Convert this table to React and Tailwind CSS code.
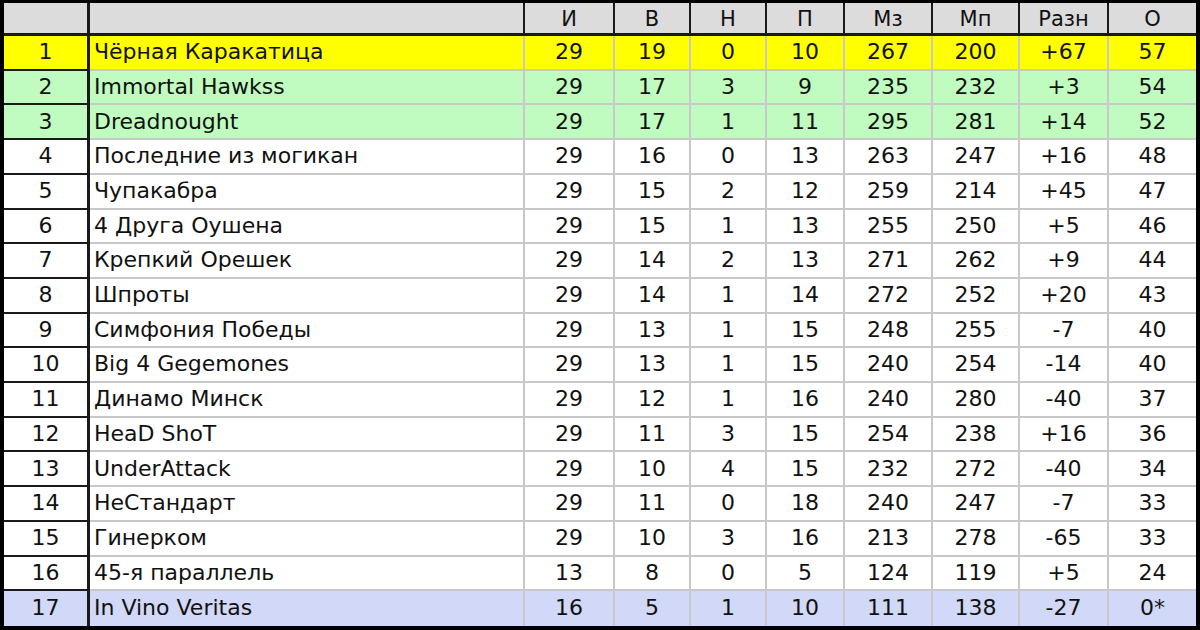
import React from 'react';

const rows = [
  [1, 'Чёрная Каракатица', 29, 19, 0, 10, 267, 200, '+67', '57'],
  [2, 'Immortal Hawkss', 29, 17, 3, 9, 235, 232, '+3', '54'],
  [3, 'Dreadnought', 29, 17, 1, 11, 295, 281, '+14', '52'],
  [4, 'Последние из могикан', 29, 16, 0, 13, 263, 247, '+16', '48'],
  [5, 'Чупакабра', 29, 15, 2, 12, 259, 214, '+45', '47'],
  [6, '4 Друга Оушена', 29, 15, 1, 13, 255, 250, '+5', '46'],
  [7, 'Крепкий Орешек', 29, 14, 2, 13, 271, 262, '+9', '44'],
  [8, 'Шпроты', 29, 14, 1, 14, 272, 252, '+20', '43'],
  [9, 'Симфония Победы', 29, 13, 1, 15, 248, 255, '-7', '40'],
  [10, 'Big 4 Gegemones', 29, 13, 1, 15, 240, 254, '-14', '40'],
  [11, 'Динамо Минск', 29, 12, 1, 16, 240, 280, '-40', '37'],
  [12, 'HeaD ShoT', 29, 11, 3, 15, 254, 238, '+16', '36'],
  [13, 'UnderAttack', 29, 10, 4, 15, 232, 272, '-40', '34'],
  [14, 'НеСтандарт', 29, 11, 0, 18, 240, 247, '-7', '33'],
  [15, 'Гинерком', 29, 10, 3, 16, 213, 278, '-65', '33'],
  [16, '45-я параллель', 13, 8, 0, 5, 124, 119, '+5', '24'],
  [17, 'In Vino Veritas', 16, 5, 1, 10, 111, 138, '-27', '0*'],
];

const headers = ['И', 'В', 'Н', 'П', 'Мз', 'Мп', 'Разн', 'О'];

// column widths include each cell's right border
const statWidths = ['w-[90px]', 'w-[76px]', 'w-[76px]', 'w-[78px]', 'w-[88px]', 'w-[87px]', 'w-[89px]', 'flex-1'];

function rowBg(place) {
  if (place === 1) return 'bg-[#ffff00]';
  if (place === 2 || place === 3) return 'bg-[#c0fcc0]';
  if (place === 17) return 'bg-[#d2d8f8]';
  return 'bg-white';
}

export default function App() {
  return (
    <div
      className="w-[1200px] h-[630px] overflow-hidden bg-white border-black border-l-4 border-r-4 border-t-[3px] border-b-4 flex flex-col text-[22px] leading-[1.2] text-[#111]"
      style={{ fontFamily: '"DejaVu Sans", Verdana, sans-serif' }}
    >
      {/* Header */}
      <div className="flex h-[33px] shrink-0 bg-[#dcdcdc] border-b-[3px] border-[#1a1a1a] text-[21px]">
        <div className="w-[86px] border-r-[3px] border-[#1a1a1a]" />
        <div className="w-[435px] border-r-2 border-[#1a1a1a]" />
        {headers.map((h, i) => (
          <div
            key={h}
            className={`${statWidths[i]} flex items-center justify-center leading-none pt-[2px] ${
              i < headers.length - 1 ? 'border-r-2 border-[#1a1a1a]' : ''
            }`}
          >
            {h}
          </div>
        ))}
      </div>

      {/* Rows */}
      {rows.map((r, idx) => {
        const last = idx === rows.length - 1;
        const [place, name, ...stats] = r;
        return (
          <div key={place} className={`flex flex-1 min-h-0 ${rowBg(place)}`}>
            <div
              className={`w-[86px] flex items-center justify-center border-r-[3px] border-[#1a1a1a] ${
                last ? '' : 'border-b-2'
              }`}
            >
              {place}
            </div>
            <div
              className={`w-[435px] flex items-center pl-[4px] border-r-2 border-[#c8c8c8] ${
                last ? '' : 'border-b-2'
              }`}
            >
              {name}
            </div>
            {stats.map((v, i) => (
              <div
                key={i}
                className={`${statWidths[i]} flex items-center justify-center border-[#c8c8c8] ${
                  i < stats.length - 1 ? 'border-r-2' : ''
                } ${last ? '' : 'border-b-2'}`}
              >
                {v}
              </div>
            ))}
          </div>
        );
      })}
    </div>
  );
}
